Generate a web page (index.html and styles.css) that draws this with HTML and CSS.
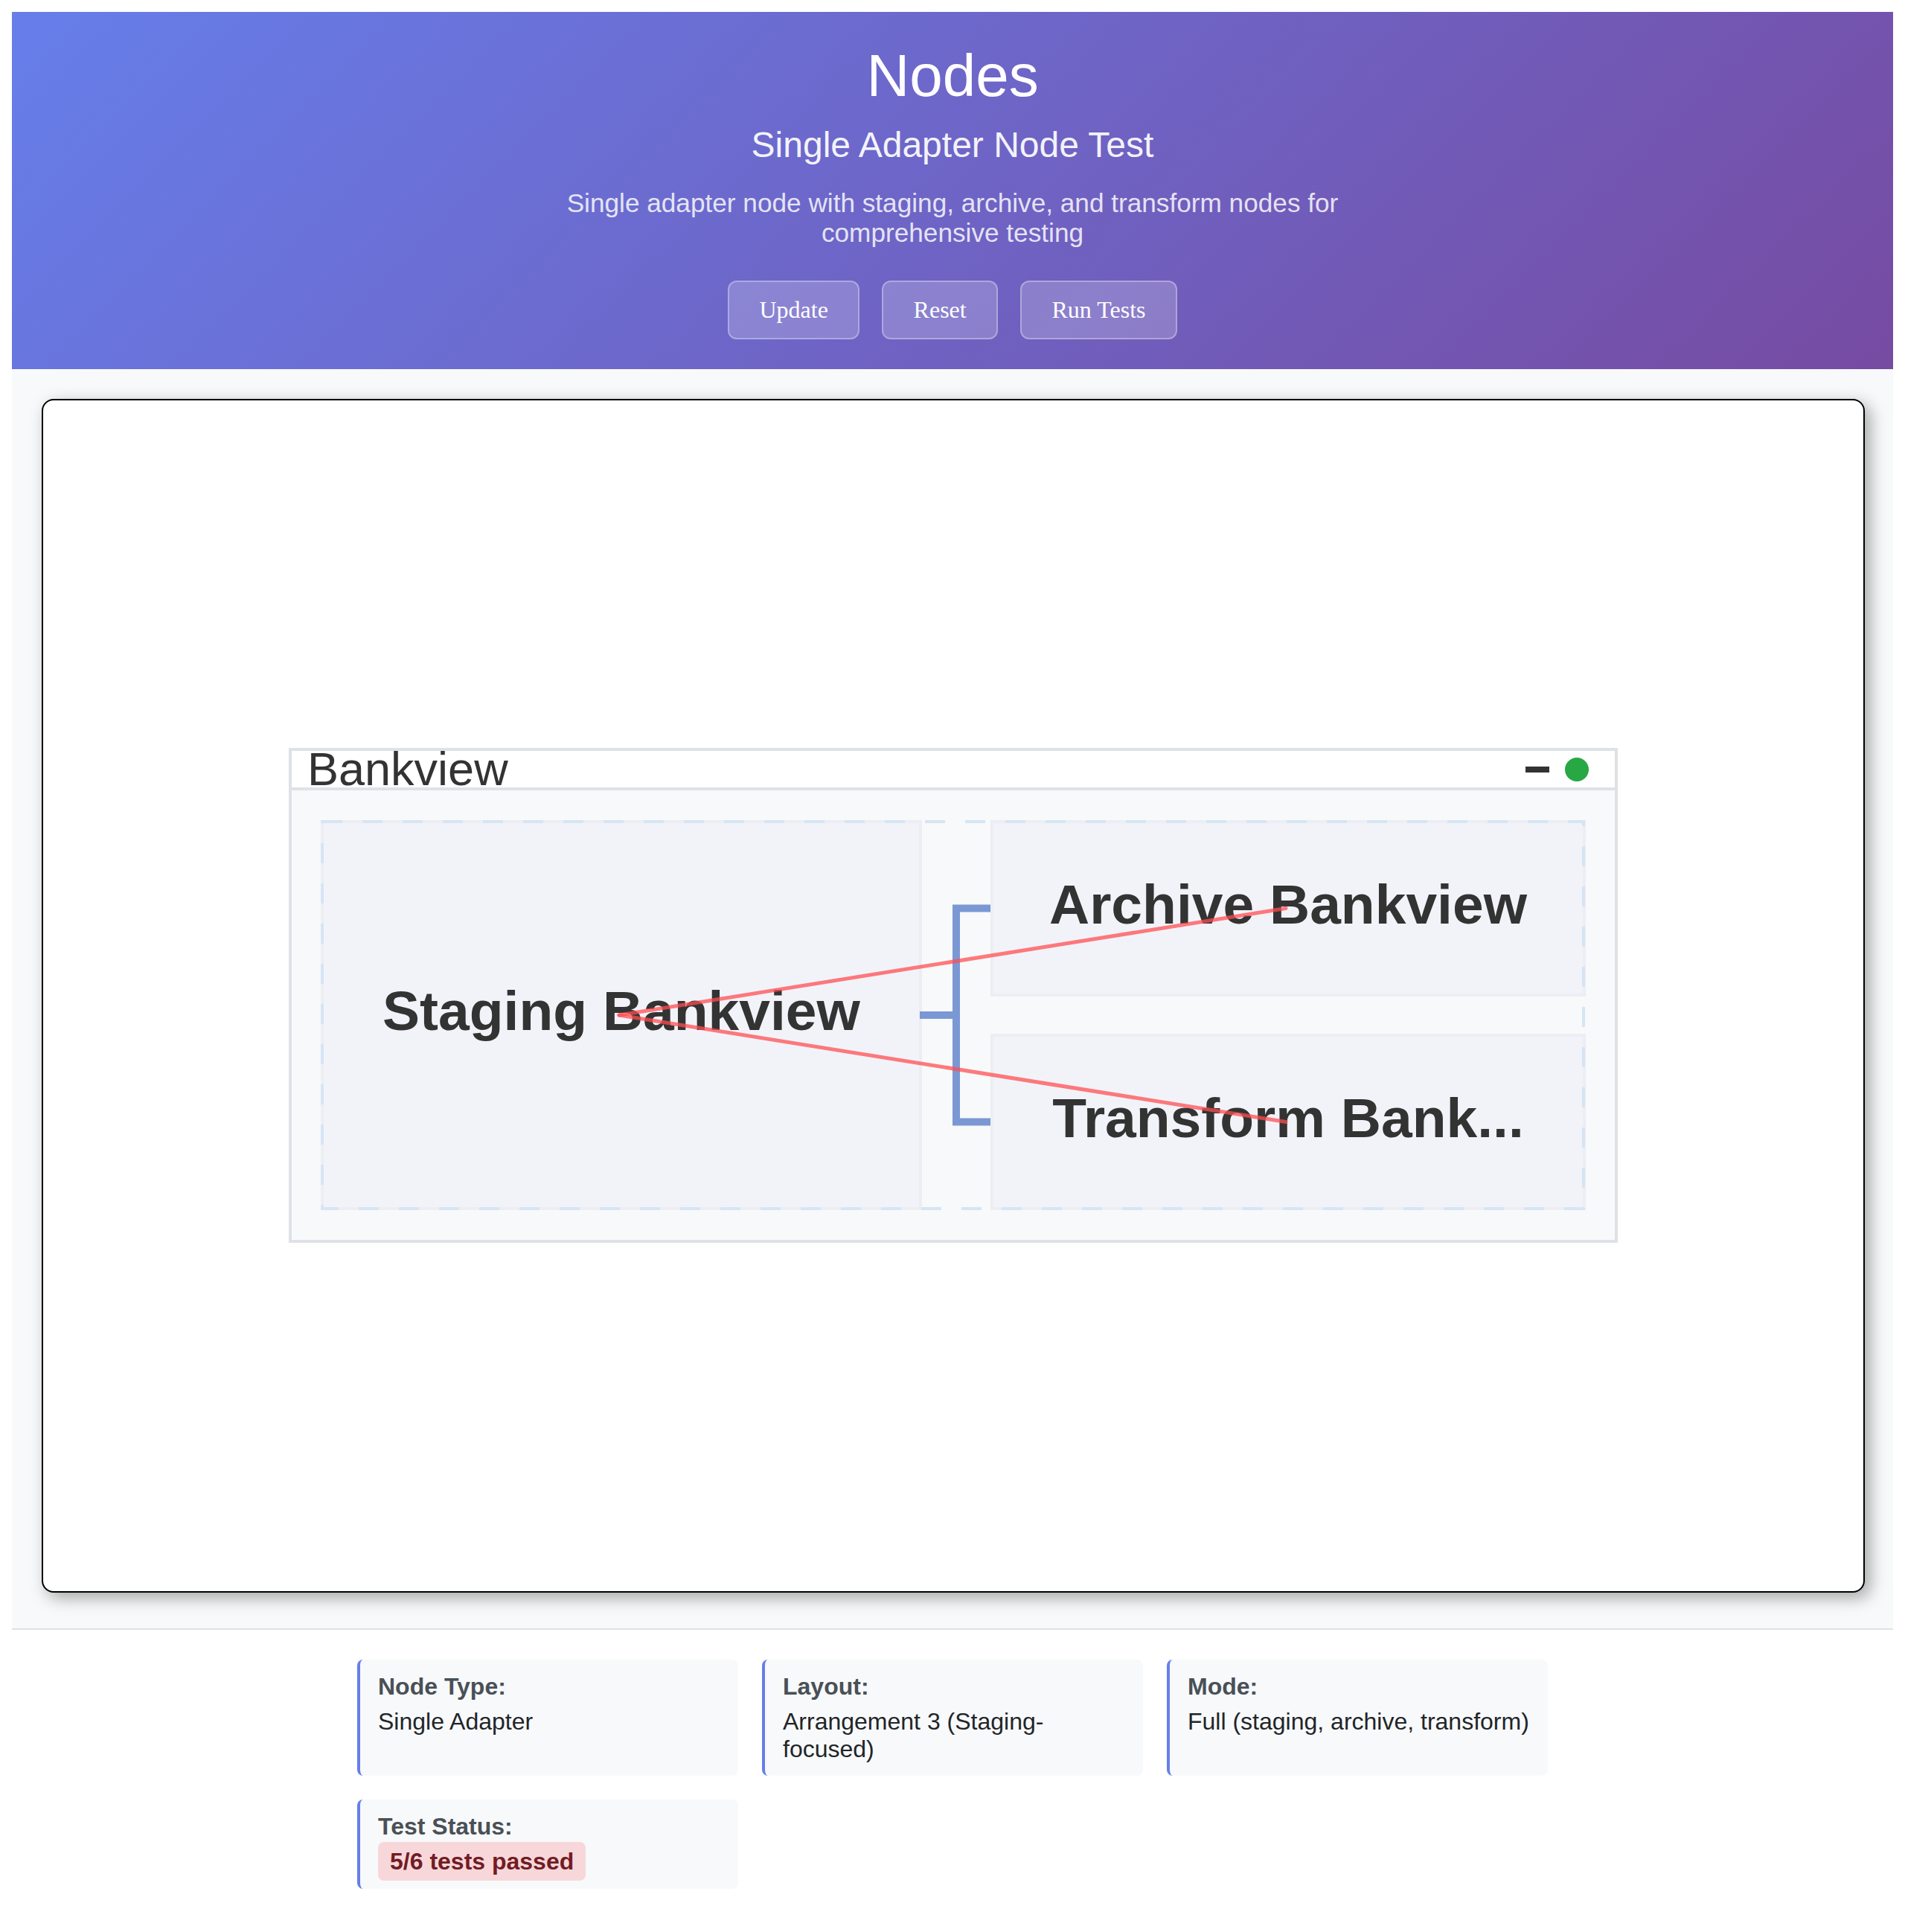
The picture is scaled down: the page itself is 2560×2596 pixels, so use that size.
FILE: index.html
```html
<!DOCTYPE html>
<html lang="en">
<head>
<meta charset="utf-8">
<title>Nodes</title>
<link rel="stylesheet" href="styles.css">
</head>
<body>
<div class="app">
  <header class="hero">
    <h1>Nodes</h1>
    <h2>Single Adapter Node Test</h2>
    <p class="desc">Single adapter node with staging, archive, and transform nodes for comprehensive testing</p>
    <div class="actions">
      <button class="btn">Update</button>
      <button class="btn">Reset</button>
      <button class="btn">Run Tests</button>
    </div>
  </header>

  <main class="stage">
    <div class="canvas">
      <div class="adapter">
        <div class="adapter-head">
          <span class="adapter-title">Bankview</span>
          <div class="controls">
            <span class="dash"></span>
            <span class="dot"></span>
          </div>
        </div>
        <div class="adapter-body">
          <div class="children">
            <div class="node staging">Staging Bankview</div>
            <div class="connector">
              <svg class="connector-svg" width="92" height="524" viewBox="0 0 92 524">
                <path d="M-3 262 H46" />
                <path d="M92 118.5 H46 V405.5 H92" />
              </svg>
            </div>
            <div class="column">
              <div class="node">Archive Bankview</div>
              <div class="node">Transform Bank...</div>
            </div>
            <svg class="dashes" width="1699" height="524" viewBox="0 0 1699 524">
              <rect x="2" y="2" width="1695" height="520" />
            </svg>
            <svg class="links" width="1699" height="524" viewBox="0 0 1699 524">
              <line x1="401" y1="262" x2="1297" y2="118.5" />
              <line x1="401" y1="262" x2="1297" y2="405.5" />
            </svg>
          </div>
        </div>
      </div>
    </div>
  </main>

  <section class="info">
    <div class="info-grid">
      <div class="info-card">
        <div class="info-label">Node Type:</div>
        <div class="info-value">Single Adapter</div>
      </div>
      <div class="info-card">
        <div class="info-label">Layout:</div>
        <div class="info-value">Arrangement 3 (Staging-focused)</div>
      </div>
      <div class="info-card">
        <div class="info-label">Mode:</div>
        <div class="info-value">Full (staging, archive, transform)</div>
      </div>
      <div class="info-card">
        <div class="info-label">Test Status:</div>
        <div class="info-value"><span class="badge">5/6 tests passed</span></div>
      </div>
    </div>
  </section>
</div>
</body>
</html>
```

FILE: styles.css
```css
body {
  margin: 16px;
  background: #ffffff;
  font-family: "Liberation Sans", Arial, sans-serif;
}

.app {
  background: #ffffff;
  box-shadow: 0 0 20px rgba(0, 0, 0, 0.08);
}

/* ---------- header ---------- */
.hero {
  background: linear-gradient(135deg, #667eea 0%, #764ba2 100%);
  color: #ffffff;
  text-align: center;
  padding: 40px 0 39.6px;
}

.hero h1 {
  margin: 0 0 19px;
  font-size: 80px;
  line-height: 92px;
  font-weight: normal;
}

.hero h2 {
  margin: 0 0 30.5px;
  font-size: 48px;
  line-height: 55.2px;
  font-weight: normal;
  opacity: 0.92;
}

.desc {
  margin: 0 auto 43.5px;
  max-width: 1200px;
  font-size: 35.2px;
  line-height: 40.5px;
  opacity: 0.82;
}

.actions {
  display: flex;
  justify-content: center;
  gap: 30px;
}

.btn {
  font-family: "Liberation Serif", "Times New Roman", serif;
  font-size: 32px;
  line-height: 36.8px;
  color: #ffffff;
  background: rgba(255, 255, 255, 0.2);
  border: 2px solid rgba(255, 255, 255, 0.3);
  border-radius: 12px;
  padding: 19.2px 40.4px;
}

/* ---------- stage ---------- */
.stage {
  background: #f8f9fa;
  padding: 40px 38px 48px 40px;
}

.canvas {
  height: 1600px;
  background: #ffffff;
  border: 2px solid #000000;
  border-radius: 16px;
  box-shadow: 7px 7px 22px rgba(0, 0, 0, 0.34);
  display: flex;
  align-items: center;
  justify-content: center;
}

.adapter {
  width: 1786px;
  box-sizing: border-box;
  border: 4px solid #dee2e6;
  background: #f8f9fa;
}

.adapter-head {
  height: 49px;
  background: #ffffff;
  border-bottom: 4px solid #dee2e6;
  display: flex;
  align-items: center;
  justify-content: space-between;
  padding: 0 35px 0 21px;
}

.adapter-title {
  font-size: 63px;
  line-height: 1;
  color: #333333;
}

.controls {
  display: flex;
  align-items: center;
  gap: 21px;
}

.dash {
  width: 32px;
  height: 8px;
  background: #333333;
}

.dot {
  width: 32px;
  height: 32px;
  border-radius: 50%;
  background: #28a745;
}

.adapter-body {
  padding: 40px 39px;
}

.children {
  position: relative;
  display: flex;
  height: 524px;
}

.node {
  flex: 1;
  box-sizing: border-box;
  background: #f2f3f9;
  border: 4px solid #eceef3;
  display: flex;
  align-items: center;
  justify-content: center;
  padding-bottom: 12px;
  font-size: 75px;
  font-weight: bold;
  color: #333333;
  white-space: nowrap;
  overflow: hidden;
}

.connector {
  flex: none;
  width: 92px;
}

.connector-svg {
  display: block;
  overflow: visible;
}

.connector-svg path {
  fill: none;
  stroke: #7a98d4;
  stroke-width: 10;
}

.column {
  flex: 1;
  display: flex;
  flex-direction: column;
  gap: 50px;
}

.dashes,
.links {
  position: absolute;
  left: 0;
  top: 0;
  overflow: visible;
  pointer-events: none;
}

.dashes rect {
  fill: none;
  stroke: #d6e5f4;
  stroke-width: 4;
  stroke-dasharray: 27 27;
}

.links line {
  stroke: #ff4d4f;
  stroke-opacity: 0.74;
  stroke-width: 5;
  stroke-linecap: round;
}

/* ---------- info ---------- */
.info {
  border-top: 2px solid #dee2e6;
  background: #ffffff;
  padding: 40px 0;
}

.info-grid {
  max-width: 1600px;
  margin: 0 auto;
  display: grid;
  grid-template-columns: repeat(3, 1fr);
  gap: 32px;
}

.info-card {
  background: #f8f9fa;
  border-left: 4px solid #667eea;
  border-radius: 8px;
  padding: 18px 24px;
}

.info-label {
  font-size: 32px;
  line-height: 36.8px;
  font-weight: bold;
  color: #495057;
  margin-bottom: 10px;
}

.info-value {
  font-size: 32px;
  line-height: 36.8px;
  color: #212529;
}

.badge {
  padding: 8px 16px;
  border-radius: 8px;
  background: #f8d7da;
  color: #721c24;
  font-weight: bold;
}
```
